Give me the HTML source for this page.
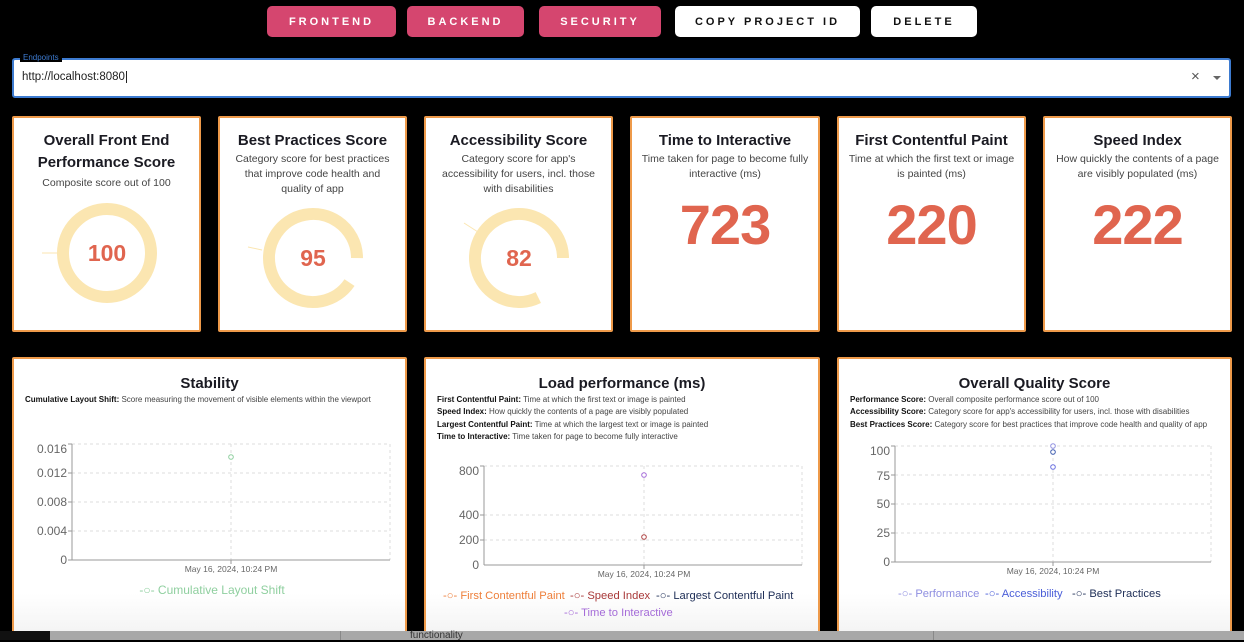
<!DOCTYPE html>
<html><head><meta charset="utf-8"><style>
*{box-sizing:border-box;margin:0;padding:0}
body{width:1244px;height:640px;background:#000;font-family:"Liberation Sans",Arial,sans-serif;position:relative;overflow:hidden;color:#111}
.btn{position:absolute;top:6px;height:31px;border-radius:5px;font-size:11px;font-weight:bold;letter-spacing:3px;display:flex;align-items:center;justify-content:center}
.pk{background:#d5466f;color:#fff}
.wh{background:#fff;color:#111}
.card{position:absolute;background:#fff;border:2px solid #ee9a4a;border-radius:2px;text-align:center}
.t{font-size:15px;font-weight:bold;color:#1a1a22;line-height:22px}
.s{font-size:10.5px;color:#444;line-height:15px}
.big{position:absolute;left:0;right:0;top:74px;font-size:56px;font-weight:bold;color:#e0654f;letter-spacing:-1px}
.desc{font-size:8px;color:#444;text-align:left;line-height:12.3px;padding-left:11px}
.desc b{color:#111}
.abs{position:absolute}
</style></head><body>
<div class="btn pk" style="left:267px;width:129px">FRONTEND</div>
<div class="btn pk" style="left:407px;width:117px">BACKEND</div>
<div class="btn pk" style="left:539px;width:122px">SECURITY</div>
<div class="btn wh" style="left:675px;width:185px">COPY PROJECT ID</div>
<div class="btn wh" style="left:871px;width:106px">DELETE</div>

<div class="abs" style="left:12px;top:58px;width:1219px;height:40px;background:#fff;border:2px solid #3d7bd0;border-radius:3px"></div>
<div class="abs" style="left:20px;top:53px;padding:0 3px;background:#000;font-size:8px;color:#3d7bd0;line-height:9px">Endpoints</div>
<div class="abs" style="left:22px;top:71px;font-size:11.5px;color:#222">http://localhost:8080<span style="border-left:1px solid #222;margin-left:1px"></span></div>
<div class="abs" style="left:1191px;top:68px;font-size:15px;color:#555">×</div>
<div class="abs" style="left:1213px;top:76px;width:0;height:0;border-left:4px solid transparent;border-right:4px solid transparent;border-top:4px solid #666"></div>

<div class="card" style="left:12px;top:116px;width:189px;height:216px;padding-top:12px">
<div class="t">Overall Front End<br>Performance Score</div><div class="s" style="margin-top:2px">Composite score out of 100</div></div>
<div class="card" style="left:218px;top:116px;width:189px;height:216px;padding-top:12px">
<div class="t">Best Practices Score</div><div class="s">Category score for best practices<br>that improve code health and<br>quality of app</div></div>
<div class="card" style="left:424px;top:116px;width:189px;height:216px;padding-top:12px">
<div class="t">Accessibility Score</div><div class="s">Category score for app's<br>accessibility for users, incl. those<br>with disabilities</div></div>
<div class="card" style="left:630px;top:116px;width:190px;height:216px;padding-top:12px">
<div class="t">Time to Interactive</div><div class="s">Time taken for page to become fully<br>interactive (ms)</div><div class="big">723</div></div>
<div class="card" style="left:837px;top:116px;width:189px;height:216px;padding-top:12px">
<div class="t">First Contentful Paint</div><div class="s">Time at which the first text or image<br>is painted (ms)</div><div class="big">220</div></div>
<div class="card" style="left:1043px;top:116px;width:189px;height:216px;padding-top:12px">
<div class="t">Speed Index</div><div class="s">How quickly the contents of a page<br>are visibly populated (ms)</div><div class="big">222</div></div>

<div class="card" style="left:12px;top:357px;width:395px;height:280px;padding-top:14px;background:linear-gradient(#fff 85%,#f3f3f3)">
<div class="t">Stability</div><div class="desc" style="margin-top:-1px"><b>Cumulative Layout Shift:</b> Score measuring the movement of visible elements within the viewport</div></div>
<div class="card" style="left:424px;top:357px;width:396px;height:280px;padding-top:14px;background:linear-gradient(#fff 85%,#f3f3f3)">
<div class="t">Load performance (ms)</div><div class="desc" style="margin-top:-1px"><b>First Contentful Paint:</b> Time at which the first text or image is painted<br><b>Speed Index:</b> How quickly the contents of a page are visibly populated<br><b>Largest Contentful Paint:</b> Time at which the largest text or image is painted<br><b>Time to Interactive:</b> Time taken for page to become fully interactive</div></div>
<div class="card" style="left:837px;top:357px;width:395px;height:280px;padding-top:14px;background:linear-gradient(#fff 85%,#f3f3f3)">
<div class="t">Overall Quality Score</div><div class="desc" style="margin-top:-1px"><b>Performance Score:</b> Overall composite performance score out of 100<br><b>Accessibility Score:</b> Category score for app's accessibility for users, incl. those with disabilities<br><b>Best Practices Score:</b> Category score for best practices that improve code health and quality of app</div></div>

<svg class="abs" style="left:0;top:0" width="1244" height="640" font-family="Liberation Sans,Arial,sans-serif">
<g fill="none" stroke="#fbe6b1" stroke-width="12">
<circle cx="107" cy="253" r="44"/>
<circle cx="313" cy="258" r="44" stroke-dasharray="250 26" transform="rotate(34 313 258)"/>
<circle cx="519" cy="258" r="44" stroke-dasharray="227 49" transform="rotate(64 519 258)"/>
</g>
<g stroke="#fbe6b1" stroke-width="1"><line x1="42" y1="253" x2="57" y2="253"/><line x1="248" y1="247" x2="262" y2="250"/><line x1="464" y1="223" x2="478" y2="232"/></g>
<g font-weight="bold" fill="#e0654f" text-anchor="middle" font-size="23">
<text x="107" y="261">100</text><text x="313" y="266">95</text><text x="519" y="266">82</text></g>

<!-- stability -->
<g stroke="#ddd" stroke-dasharray="3 3" fill="none"><line x1="72" y1="444" x2="390" y2="444"/><line x1="72" y1="473" x2="390" y2="473"/><line x1="72" y1="502" x2="390" y2="502"/><line x1="72" y1="531" x2="390" y2="531"/><line x1="390" y1="444" x2="390" y2="560"/><line x1="231" y1="444" x2="231" y2="560"/></g>
<g stroke="#999"><line x1="72" y1="444" x2="72" y2="560"/><line x1="72" y1="560" x2="390" y2="560"/><line x1="68" y1="444" x2="72" y2="444"/><line x1="68" y1="473" x2="72" y2="473"/><line x1="68" y1="502" x2="72" y2="502"/><line x1="68" y1="531" x2="72" y2="531"/><line x1="68" y1="560" x2="72" y2="560"/><line x1="231" y1="560" x2="231" y2="564"/></g>
<g font-size="12" fill="#666" text-anchor="end"><text x="67" y="453">0.016</text><text x="67" y="477">0.012</text><text x="67" y="506">0.008</text><text x="67" y="535">0.004</text><text x="67" y="564">0</text></g>
<text x="231" y="572" font-size="8.5" fill="#666" text-anchor="middle">May 16, 2024, 10:24 PM</text>
<circle cx="231" cy="457" r="2.3" fill="#fff" stroke="#8fcf9f"/>
<text x="212" y="594" font-size="12" fill="#8fcf9f" text-anchor="middle">-○- Cumulative Layout Shift</text>
<!-- load -->
<g stroke="#ddd" stroke-dasharray="3 3" fill="none"><line x1="484" y1="466" x2="802" y2="466"/><line x1="484" y1="515" x2="802" y2="515"/><line x1="484" y1="540" x2="802" y2="540"/><line x1="802" y1="466" x2="802" y2="565"/><line x1="644" y1="466" x2="644" y2="565"/></g>
<g stroke="#999"><line x1="484" y1="466" x2="484" y2="565"/><line x1="484" y1="565" x2="802" y2="565"/><line x1="480" y1="466" x2="484" y2="466"/><line x1="480" y1="515" x2="484" y2="515"/><line x1="480" y1="540" x2="484" y2="540"/><line x1="644" y1="565" x2="644" y2="569"/></g>
<g font-size="12" fill="#666" text-anchor="end"><text x="479" y="475">800</text><text x="479" y="519">400</text><text x="479" y="544">200</text><text x="479" y="569">0</text></g>
<text x="644" y="577" font-size="8.5" fill="#666" text-anchor="middle">May 16, 2024, 10:24 PM</text>
<circle cx="644" cy="475" r="2.3" fill="#fff" stroke="#a56cd8"/>
<circle cx="644" cy="537" r="2.3" fill="#fff" stroke="#b04545"/>
<g font-size="11.2"><text x="443" y="599" fill="#ee7f3a">-○- First Contentful Paint</text><text x="570" y="599" fill="#a83838">-○- Speed Index</text><text x="656" y="599" fill="#1d2d56">-○- Largest Contentful Paint</text><text x="564" y="616" fill="#a56cd8">-○- Time to Interactive</text></g>
<!-- quality -->
<g stroke="#ddd" stroke-dasharray="3 3" fill="none"><line x1="895" y1="446" x2="1211" y2="446"/><line x1="895" y1="475" x2="1211" y2="475"/><line x1="895" y1="504" x2="1211" y2="504"/><line x1="895" y1="533" x2="1211" y2="533"/><line x1="1211" y1="446" x2="1211" y2="562"/><line x1="1053" y1="446" x2="1053" y2="562"/></g>
<g stroke="#999"><line x1="895" y1="446" x2="895" y2="562"/><line x1="895" y1="562" x2="1211" y2="562"/><line x1="891" y1="446" x2="895" y2="446"/><line x1="891" y1="475" x2="895" y2="475"/><line x1="891" y1="504" x2="895" y2="504"/><line x1="891" y1="533" x2="895" y2="533"/><line x1="891" y1="562" x2="895" y2="562"/><line x1="1053" y1="562" x2="1053" y2="566"/></g>
<g font-size="12" fill="#666" text-anchor="end"><text x="890" y="455">100</text><text x="890" y="480">75</text><text x="890" y="508">50</text><text x="890" y="537">25</text><text x="890" y="566">0</text></g>
<text x="1053" y="574" font-size="8.5" fill="#666" text-anchor="middle">May 16, 2024, 10:24 PM</text>
<circle cx="1053" cy="446" r="2.3" fill="#fff" stroke="#9090e0"/>
<circle cx="1053" cy="452" r="2.3" fill="#fff" stroke="#3f5db0"/>
<circle cx="1053" cy="467" r="2.3" fill="#fff" stroke="#6a70e0"/>
<g font-size="11.2"><text x="898" y="597" fill="#8e8ee0">-○- Performance</text><text x="985" y="597" fill="#4a5ed8">-○- Accessibility</text><text x="1072" y="597" fill="#1d2d56">-○- Best Practices</text></g>
</svg>

<div class="abs" style="left:0;top:631px;width:1244px;height:9px;background:#a8a8a8"></div>
<div class="abs" style="left:0;top:631px;width:50px;height:9px;background:#111"></div>
<div class="abs" style="left:340px;top:631px;width:1px;height:9px;background:#888"></div>
<div class="abs" style="left:933px;top:631px;width:1px;height:9px;background:#888"></div>
<div class="abs" style="left:410px;top:630px;font-size:10px;color:#333;line-height:12px">functionality</div>
</body></html>
